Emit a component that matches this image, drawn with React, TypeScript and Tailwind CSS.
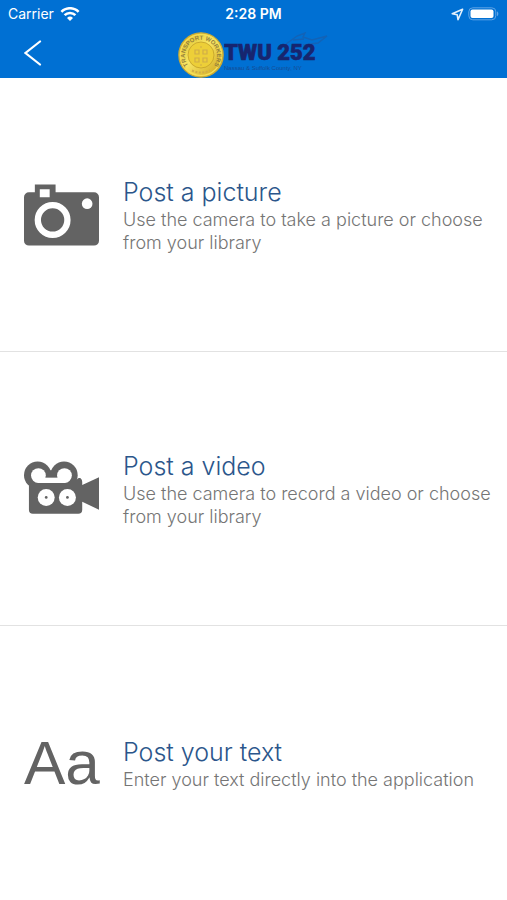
import type { ReactNode } from 'react';

/* ─── Icons ─── */

function WifiIcon() {
  return (
    <svg width="20" height="15" viewBox="0 0 20 15" fill="none" stroke="white" strokeWidth="2.6">
      <path d="M1.4 4.8a12.2 12.2 0 0 1 17.2 0" />
      <path d="M4.6 8.2a7.6 7.6 0 0 1 10.8 0" />
      <path d="M7 11a4.3 4.3 0 0 1 6 0L10 14z" fill="white" stroke="none" />
    </svg>
  );
}

function LocationIcon() {
  return (
    <svg width="13" height="13" viewBox="0 0 13 13" fill="none" stroke="#e3f0fb" strokeWidth="1.6" strokeLinejoin="round">
      <path d="M11.6 1.2 1.2 5.8l5 .9.8 5z" />
    </svg>
  );
}

function BatteryIcon() {
  return (
    <svg width="31" height="15" viewBox="0 0 31 15" fill="none">
      <rect x="0.8" y="0.8" width="27" height="12" rx="4" stroke="#5fa4e6" strokeWidth="1" />
      <rect x="2.5" y="2.5" width="23" height="8.6" rx="2" fill="white" />
      <path d="M29 4.600v4.600c1.8-.7 1.8-3.900 0-4.600z" fill="#5fa4e6" />
    </svg>
  );
}

function BackIcon() {
  return (
    <svg width="18" height="26" viewBox="0 0 18 26" fill="none" stroke="white" strokeWidth="2.2" strokeLinecap="round">
      <path d="M16 1.5 1.5 13 16 24.5" />
    </svg>
  );
}

function CameraIcon() {
  return (
    <svg width="76" height="64" viewBox="0 0 76 64" className="w-full">
      <path
        fill="#636363"
        fillRule="evenodd"
        d="M11 1h21v8h39a5 5 0 0 1 5 5v44a5 5 0 0 1-5 5H5a5 5 0 0 1-5-5V14a5 5 0 0 1 5-5h6zM16 6v8h10V6z"
      />
      <circle cx="29" cy="37" r="15" fill="none" stroke="white" strokeWidth="6.4" />
      <circle cx="64" cy="20.5" r="5.4" fill="white" />
    </svg>
  );
}

function VideoIcon() {
  return (
    <svg width="76" height="56" viewBox="0 0 76 56" className="w-full">
      <g fill="#636363">
        <circle cx="13.8" cy="14" r="13.8" />
        <circle cx="40.6" cy="14" r="13.8" />
        <path d="M20 9h14v12H20zM5 19h48c3-4 6-2 6 2v3l17-8v33l-17-8v8a4 4 0 0 1-4 4H9a4 4 0 0 1-4-4z" />
      </g>
      {/* reel openings joined along the bottom */}
      <g fill="white">
        <circle cx="14.6" cy="14.4" r="7.5" />
        <circle cx="41" cy="14.4" r="7.5" />
        <path d="M14 16.500h28v5.400H14z" />
      </g>
      <circle cx="22.5" cy="36.500" r="8.6" fill="white" />
      <circle cx="44" cy="36.500" r="8.6" fill="white" />
      <circle cx="22.5" cy="36.500" r="1.4" fill="#636363" />
      <circle cx="44" cy="36.500" r="1.4" fill="#636363" />
    </svg>
  );
}

/* ─── Header ─── */

function Seal() {
  return (
    <svg width="46" height="46" viewBox="0 0 46 46" className="shrink-0">
      <defs>
        <linearGradient id="gold" x1="0" y1="0" x2="1" y2="1">
          <stop offset="0" stopColor="#d9b71c" />
          <stop offset="0.45" stopColor="#f8e665" />
          <stop offset="1" stopColor="#c99d12" />
        </linearGradient>
        <path id="sealTop" d="M10 33a16 16 0 1 1 26 0" />
      </defs>
      <circle cx="23" cy="23" r="22.2" fill="url(#gold)" stroke="#c7a936" strokeWidth="1.2" />
      <circle cx="23" cy="23" r="20.5" fill="none" stroke="#f5df59" strokeWidth="1.2" />
      <circle cx="23" cy="23" r="13" fill="#edcf38" stroke="#c2a029" strokeWidth="0.8" />
      <text fontSize="6" fontWeight="700" fill="#94803c" fontFamily="Liberation Sans, sans-serif">
        <textPath href="#sealTop" startOffset="50%" textAnchor="middle">TRANSPORT WORKERS</textPath>
      </text>
      <g fill="none" stroke="#d0ad48" strokeWidth="1.2">
        <path d="M17 18h4v4h-4zM25 18h4v4h-4zM17 26h4v4h-4zM25 26h4v4h-4zM22 15h2M22 33h2" />
        <path d="M14 38.5q9 4 18 0" strokeDasharray="2 1.5" strokeWidth="2" />
      </g>
    </svg>
  );
}

function Logo() {
  return (
    <div className="flex items-center">
      <Seal />
      <svg width="106" height="46" viewBox="0 0 106 46" className="shrink-0">
        <g fill="none" stroke="#1263b7" strokeWidth="1.4">
          <path d="M62 12 73 4l8-3-2 4 9 3 15-4-9 7-15 2M69 8l11-1" />
        </g>
        <text
          x="0"
          y="28"
          fontSize="22"
          fontWeight="900"
          fill="#17256f"
          stroke="#17256f"
          strokeWidth="0.6"
          fontFamily="Roboto, sans-serif"
        >
          TWU 252
        </text>
        <text x="0" y="38" fontSize="6" fill="#164c94" fontFamily="Liberation Sans, sans-serif">
          Nassau &amp; Suffolk County, NY
        </text>
      </svg>
    </div>
  );
}

function Header() {
  return (
    <header className="bg-[#0070d3] text-white">
      <div className="grid h-7 grid-cols-3 items-center px-2 text-sm">
        <div className="flex items-center gap-1.5">
          <span>Carrier</span>
          <WifiIcon />
        </div>
        <span className="text-center font-semibold">2:28 PM</span>
        <div className="flex items-center justify-end gap-1">
          <LocationIcon />
          <BatteryIcon />
        </div>
      </div>
      <div className="grid h-[50px] grid-cols-[1fr_auto_1fr] items-end px-6">
        <button type="button" aria-label="Back" className="self-center justify-self-start">
          <BackIcon />
        </button>
        <Logo />
      </div>
    </header>
  );
}

/* ─── Options ─── */

function Option({ icon, title, text }: { icon: ReactNode; title: string; text: string }) {
  return (
    <li className="flex">
      <button type="button" className="flex flex-1 items-center gap-6 pr-2 pl-6 text-left font-light">
        <span className="w-[75px] shrink-0">{icon}</span>
        <span className="flex-1">
          <span className="block text-[25px] leading-8 text-[#2b568b]">{title}</span>
          <span className="block text-[18px] leading-[23px] text-[#757575]">{text}</span>
        </span>
      </button>
    </li>
  );
}

export default function App() {
  return (
    <div className="flex min-h-screen flex-col bg-white font-[Inter,sans-serif]">
      <Header />
      <ul className="grid flex-1 auto-rows-fr divide-y divide-[#e2e2e2]">
        <Option
          icon={<CameraIcon />}
          title="Post a picture"
          text="Use the camera to take a picture or choose from your library"
        />
        <Option
          icon={<VideoIcon />}
          title="Post a video"
          text="Use the camera to record a video or choose from your library"
        />
        <Option
          icon={
            <span className="block font-['Liberation_Sans',sans-serif] text-[62px] leading-none font-normal text-[#636363]">
              Aa
            </span>
          }
          title="Post your text"
          text="Enter your text directly into the application"
        />
      </ul>
    </div>
  );
}
